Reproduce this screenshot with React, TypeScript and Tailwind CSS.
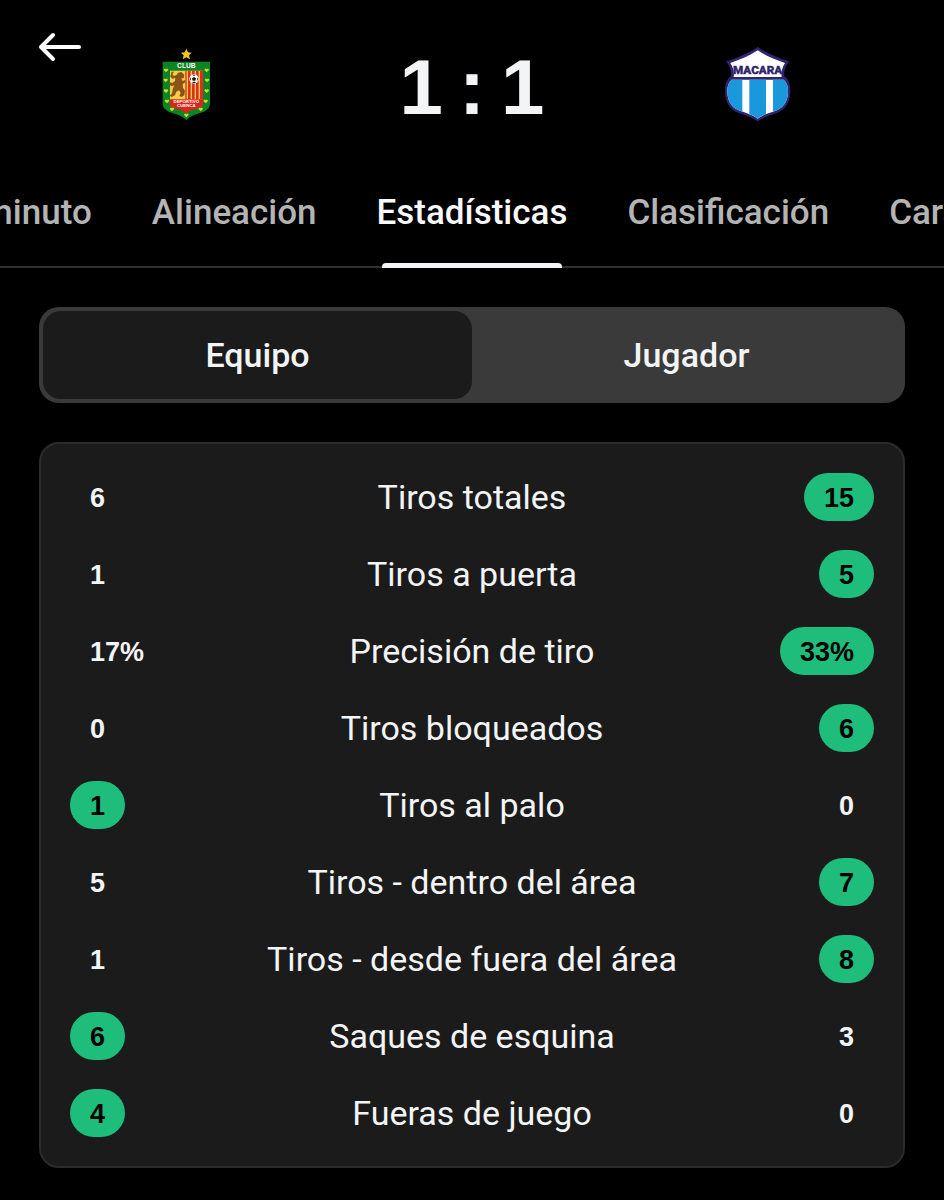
import { useState } from "react"

type Side = "home" | "away"

type Stat = {
    label: string
    home: string
    away: string
    best: Side
}

const previousTabs = ["Minuto a minuto", "Alineación"]
const nextTabs = ["Clasificación", "Cara a cara"]

const stats: Stat[] = [
    { label: "Tiros totales", home: "6", away: "15", best: "away" },
    { label: "Tiros a puerta", home: "1", away: "5", best: "away" },
    { label: "Precisión de tiro", home: "17%", away: "33%", best: "away" },
    { label: "Tiros bloqueados", home: "0", away: "6", best: "away" },
    { label: "Tiros al palo", home: "1", away: "0", best: "home" },
    { label: "Tiros - dentro del área", home: "5", away: "7", best: "away" },
    { label: "Tiros - desde fuera del área", home: "1", away: "8", best: "away" },
    { label: "Saques de esquina", home: "6", away: "3", best: "home" },
    { label: "Fueras de juego", home: "4", away: "0", best: "home" },
]

// centres of the small hearts on the green border
const hearts = [
    [48, 91], [47, 121], [48, 153], [51, 184], [66, 208],
    [170, 91], [171, 121], [170, 153], [167, 184], [152, 208], [109, 226],
]

const CuencaCrest = () => (
    <svg viewBox="-9 18 234 234" className="size-[78px]" role="img" aria-label="Deportivo Cuenca">
        <path d="M109 26l5 11 11 1-8 8 3 12-11-6-11 6 3-12-8-8 11-1z" fill="#f5c521" />
        <path d="M38 65h142v125c0 12-6 19-18 25-20 7-36 9-53 25-17-16-33-18-53-25-12-6-18-13-18-25z" fill="#0d8424" />
        <path d="M60 92h99v90H60z" fill="#f6cf45" />
        <path d="M106 92h4v86h-4zM114 92h8v86h-8zM126 92h8v86h-8zM138 92h8v86h-8zM150 92h9v86h-9z" fill="#dd2f22" />
        {/* rampant lion */}
        <path d="M84 98l10-2 9 8-1 9-8 3 4 7 7-3 2 6-9 7 1 10 6 9-2 14-8 5-7-3 4-9-5-8-8 4-4 11-10 5-6-4 7-7 2-12 5-12-9 3-8-7 1-7 10 4 8-6 1-9-9 2-7-8 5-4 8 4 7-4z" fill="#8a5418" />
        <path d="M64 95h8l-4 7 3 9-5 4-4-7z" fill="#8d5a18" />
        <circle cx="132" cy="117" r="14" fill="#fff" />
        <path d="M132 111l6 4-2 7h-8l-2-7zM127 104h10l-5 4zM120 112l3 5-3 6zM144 112l-3 5 3 6zM126 128l4-3h4l4 3-6 2z" fill="#151515" />
        <path d="M60 178h99v13c0 6-5 11-12 13l-23 7-15 8-15-8-23-7c-7-2-11-7-11-13z" fill="#d9251d" />
        <g fill="#fff" fontFamily="Liberation Sans, sans-serif" fontWeight="700" textAnchor="middle">
            <text x="109" y="83" fontSize="20">CLUB</text>
            <text x="109" y="190" fontSize="13">DEPORTIVO</text>
            <text x="109" y="201" fontSize="13">CUENCA</text>
        </g>
        {hearts.map(([x, y]) => (
            <path key={`${x}-${y}`} d={`M${x} ${y + 6}l-7-7 2-4h4l1 2 1-2h4l2 4z`} fill="#c9dc2f" />
        ))}
    </svg>
)

const MacaraCrest = () => (
    <svg viewBox="12 18 234 234" className="size-[78px]" role="img" aria-label="Macará">
        <path d="M128 21c30 20 60 32 95 43-12 16-17 30-15 45 13 10 18 24 18 43 0 34-14 56-39 66-21 8-42 13-59 26-17-13-38-18-59-26-25-10-39-32-39-66 0-19 5-33 18-43 2-15-3-29-15-45 35-11 65-23 95-43z" fill="#30246e" />
        <path d="M128 31c26 17 52 28 82 38-9 14-12 28-10 42H56c2-14-1-28-10-42 30-10 56-21 82-38z" fill="#fff" />
        <path d="M50 119h156c9 8 13 19 13 34 0 31-13 49-34 58-20 8-42 13-57 25-15-12-37-17-57-25-21-9-34-27-34-58 0-15 4-26 13-34z" fill="#fff" />
        <path d="M50 119h32v96l-11-4c-21-9-34-27-34-58 0-15 4-26 13-34zM103 119h50v104c-9 3-18 7-25 13-7-6-16-10-25-13zM174 119h32c9 8 13 19 13 34 0 31-13 49-34 58l-11 4z" fill="#1b97dc" />
        <text x="128" y="101" fill="#30246e" stroke="#30246e" strokeWidth="1" fontFamily="Roboto, sans-serif" fontWeight="900" fontSize="35" textAnchor="middle">MACARA</text>
    </svg>
)

type TabProps = {
    label: string
    active?: boolean
}
const Tab = ({ label, active }: TabProps) => (
    <a
        href="#"
        aria-current={active ? "page" : undefined}
        className={`flex shrink-0 flex-col whitespace-nowrap text-[35px] leading-[40px] font-medium ${active ? "text-[#f8f9fa]" : "text-[#b4b4b4]"}`}
    >
        {label}
        {active && <span className="mx-[5px] mt-[30px] -mb-[2px] h-[5px] rounded-t-[4px] bg-[#f3f4f5]" />}
    </a>
)

type ValueProps = {
    value: string
    best: boolean
}
const Value = ({ value, best }: ValueProps) => (
    <span
        className={`inline-flex h-[48px] items-center rounded-full px-5 pt-[2px] align-top font-['Liberation_Sans',sans-serif] text-[27px] font-bold ${best ? "bg-[#1fbd7b] text-black" : "text-[#f3f4f5]"}`}
    >
        {value}
    </span>
)

const App = () => {
    const [view, setView] = useState("Equipo")

    return (
        <div className="min-h-screen bg-black pb-[33px] font-[Roboto,sans-serif] text-[#f3f4f5]">
            <header className="relative grid grid-cols-3 items-center px-[43px] pt-[46px]">
                <button type="button" aria-label="Volver" className="absolute top-[32px] left-[36px]">
                    <svg viewBox="0 0 48 30" className="h-[30px] w-[48px]" fill="none" stroke="#fff" strokeWidth="4" strokeLinecap="round" strokeLinejoin="round">
                        <path d="M43 15H5M17 3L5 15l12 12" />
                    </svg>
                </button>
                <div className="flex justify-center"><CuencaCrest /></div>
                <div className="flex items-center justify-center gap-4 pt-1 font-['Liberation_Sans',sans-serif] text-[78px] leading-[74px] font-bold">
                    <span>1</span>
                    <span>:</span>
                    <span>1</span>
                </div>
                <div className="flex justify-center"><MacaraCrest /></div>
            </header>

            <nav className="mt-[69px] grid grid-cols-[1fr_auto_1fr] gap-[60px] border-b-2 border-[#2f2f2f]">
                <div className="flex min-w-0 justify-end gap-[60px] overflow-hidden">
                    {previousTabs.map((label) => <Tab key={label} label={label} />)}
                </div>
                <Tab label="Estadísticas" active />
                <div className="flex min-w-0 gap-[60px] overflow-hidden">
                    {nextTabs.map((label) => <Tab key={label} label={label} />)}
                </div>
            </nav>

            <main className="mt-[39px] px-[39px]">
                <div className="flex rounded-[20px] bg-[#3a3a3a] p-[4px]">
                    {["Equipo", "Jugador"].map((name) => (
                        <button
                            key={name}
                            type="button"
                            aria-pressed={view === name}
                            onClick={() => { setView(name) }}
                            className={`h-[88px] flex-1 rounded-[18px] text-[34px] font-medium ${view === name ? "bg-[#1b1b1b]" : ""}`}
                        >
                            {name}
                        </button>
                    ))}
                </div>

                <div className="mt-[39px] rounded-[20px] border-2 border-[#2b2b2b] bg-[#1b1b1b] px-[29px]">
                    <table className="w-full table-fixed border-separate border-spacing-x-0 border-spacing-y-[29px]">
                        <tbody>
                            {stats.map((stat) => (
                                <tr key={stat.label}>
                                    <td className="w-[120px] p-0 text-left">
                                        <Value value={stat.home} best={stat.best === "home"} />
                                    </td>
                                    <th scope="row" className="p-0 text-center text-[34px] leading-[48px] font-normal">{stat.label}</th>
                                    <td className="w-[120px] p-0 text-right">
                                        <Value value={stat.away} best={stat.best === "away"} />
                                    </td>
                                </tr>
                            ))}
                        </tbody>
                    </table>
                </div>
            </main>
        </div>
    )
}
export default App
